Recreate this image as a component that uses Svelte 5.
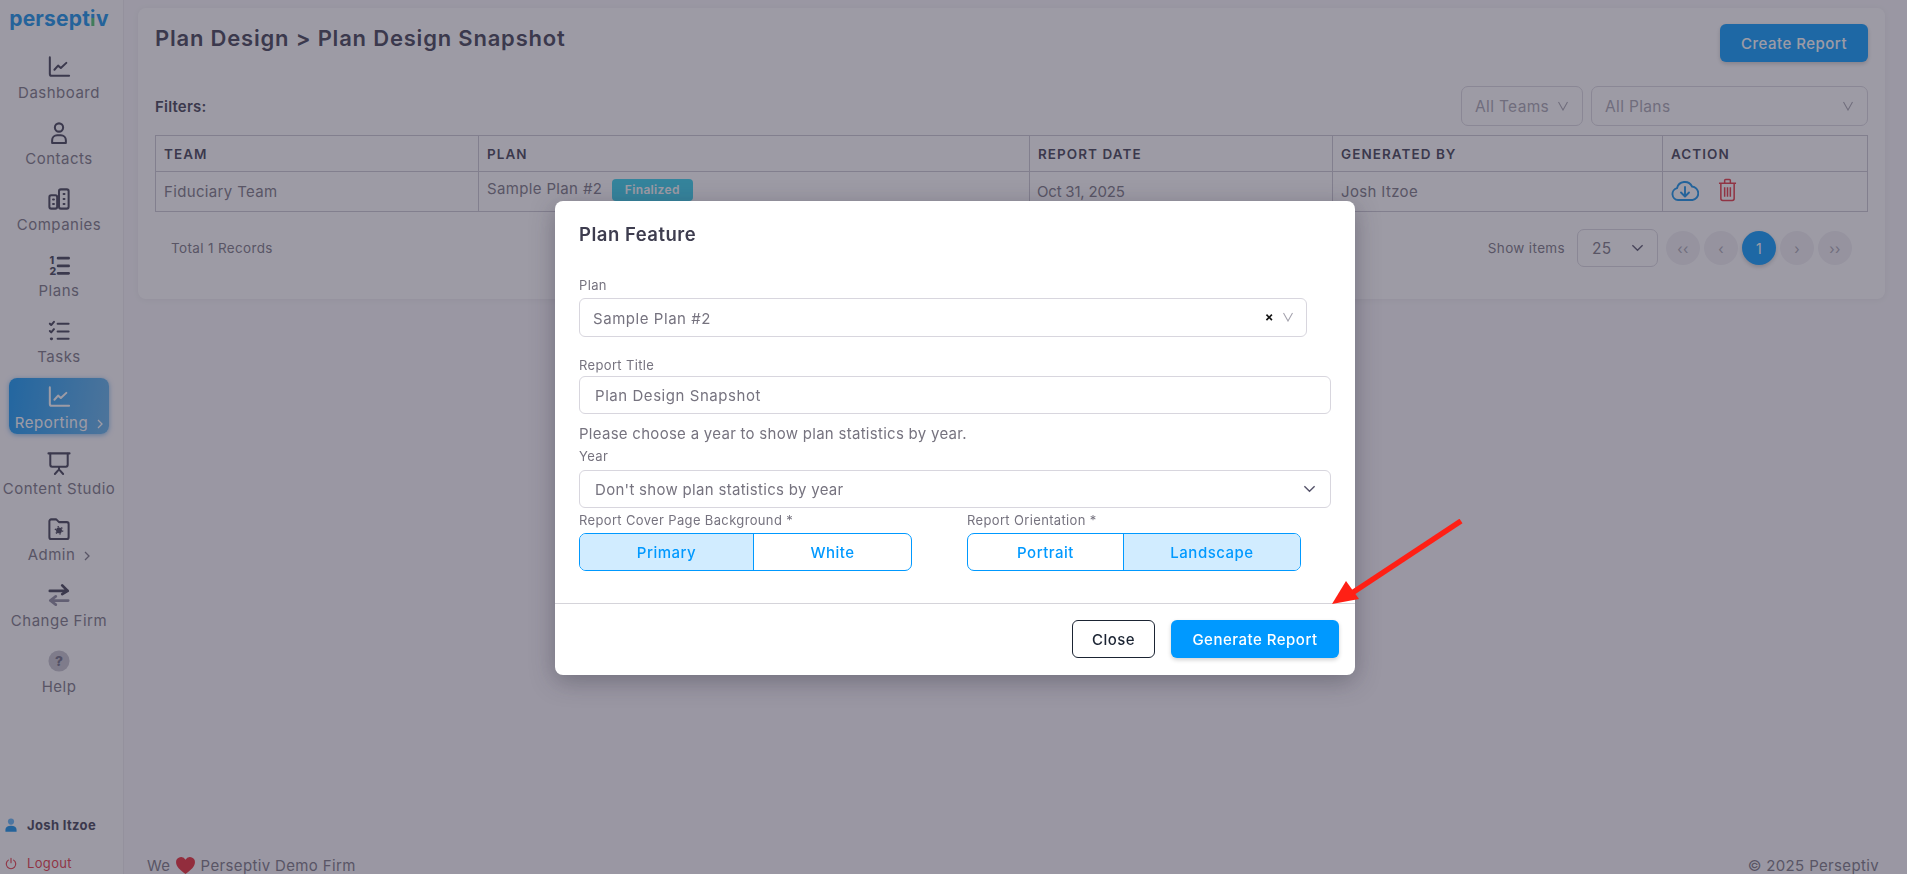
<script>
  const nav = [
    { label: 'Dashboard', icon: 'chart' },
    { label: 'Contacts', icon: 'user' },
    { label: 'Companies', icon: 'company' },
    { label: 'Plans', icon: 'plans' },
    { label: 'Tasks', icon: 'tasks' },
    { label: 'Reporting', icon: 'chart', active: true, more: true },
    { label: 'Content Studio', icon: 'board' },
    { label: 'Admin', icon: 'folder', more: true },
    { label: 'Change Firm', icon: 'swap' },
    { label: 'Help', icon: 'help' }
  ]
  const pages = ['‹‹', '‹', '1', '›', '››']
</script>

{#snippet chevron()}
  <svg class="vee" viewBox="0 0 12 10"><path d="M1.5 1l4.5 8 4.5-8" /></svg>
{/snippet}

{#snippet down()}
  <svg class="down" viewBox="0 0 14 8"><path d="M1.5 1l5.5 5.5 5.5-5.5" /></svg>
{/snippet}

{#snippet navicon(name)}
  <svg class="icon" viewBox="0 0 24 24">
    {#if name === 'chart'}
      <path d="M2 1.500v18a2 2 0 0 0 2 2h19" /><path d="M7 15l4-4.500 3 2.500 6-5.500" />
    {:else if name === 'user'}
      <circle cx="12" cy="6" r="4.500" /><path d="M4.500 23v-3a5.500 5.500 0 0 1 5.500-5.500h4a5.500 5.500 0 0 1 5.500 5.500v3z" />
    {:else if name === 'company'}
      <rect x="1.500" y="8" width="8.500" height="14.500" rx="2" /><rect x="12" y="1.500" width="10.500" height="21" rx="2" />
      <path class="dots" d="M5.500 12.500h1M5.500 17.500h1M17 6.500h1M17 12h1M17 17.500h1" />
    {:else if name === 'plans'}
      <text x="1.500" y="10.500" class="num">1</text><text x="1.500" y="22.500" class="num">2</text>
      <path class="thick" d="M11 4.500h11.500M11 13h11.500M11 21h11.500" />
    {:else if name === 'tasks'}
      <path d="M2 4l1.500 1.500 3-3.500M2 12l1.500 1.500 3-3.500" /><path d="M3.500 20.500h.5" class="thick" />
      <path d="M10.500 4h12M10.500 12.500h12M10.500 20.500h12" />
    {:else if name === 'board'}
      <path d="M.5 1.500h23" /><path d="M2.500 2v12a2 2 0 0 0 2 2h15a2 2 0 0 0 2-2V2" /><path d="M12 16.500v2.500M7.500 24l4.500-5 4.500 5" />
    {:else if name === 'folder'}
      <path d="M1.500 3.500a2 2 0 0 1 2-2h5.500l3 3h8.500a2 2 0 0 1 2 2V21a2 2 0 0 1-2 2H3.500a2 2 0 0 1-2-2z" />
      <circle class="gear" cx="12" cy="13.500" r="3.200" />
      <circle class="teeth" cx="12" cy="13.500" r="4" />
    {:else if name === 'swap'}
      <path class="thick" d="M2 7.500h19.500M15.500 1.500l6 6-6 3.500" />
      <path class="thick faded" d="M22 18h-19.500M8.500 13.500l-6 4.500 6 4.500" />
    {:else}
      <circle class="ball" cx="12" cy="12" r="11.500" /><text x="12" y="17" class="q">?</text>
    {/if}
  </svg>
{/snippet}

<div class="page">
  <aside>
    <div class="logo">persept<span class="logo-i">i</span>v</div>
    <nav>
      {#each nav as item}
        <div class="item" class:active={item.active}>
          {@render navicon(item.icon)}
          <div class="label">
            {item.label}
            {#if item.more}
              <svg class="more" viewBox="0 0 6 10"><path d="M1 1l4 4-4 4" /></svg>
            {/if}
          </div>
        </div>
      {/each}
    </nav>
    <div class="me">
      <svg viewBox="0 0 14 16"><circle cx="7" cy="4" r="3.600" fill="#5fb4f5" /><path d="M.5 16v-2.500C.5 10.500 3 9 7 9s6.500 1.500 6.500 4.500V16z" fill="#0d8fe8" /></svg>
      <b>Josh Itzoe</b>
    </div>
    <div class="logout">
      <svg viewBox="0 0 16 16"><path d="M4.500 3.500a6.300 6.300 0 1 0 7 0M8 1v6" /></svg>
      Logout
    </div>
  </aside>

  <main>
    <section class="card">
      <div class="head">
        <h1>Plan Design &gt; Plan Design Snapshot</h1>
        <button class="create">Create Report</button>
      </div>
      <div class="filters">
        <b>Filters:</b>
        <div class="pick teams"><span>All Teams</span>{@render chevron()}</div>
        <div class="pick plans"><span>All Plans</span>{@render chevron()}</div>
      </div>
      <table>
        <colgroup>
          <col style="width:323px" /><col style="width:551px" /><col style="width:303px" /><col style="width:330px" /><col />
        </colgroup>
        <thead>
          <tr><th>TEAM</th><th>PLAN</th><th>REPORT DATE</th><th>GENERATED BY</th><th>ACTION</th></tr>
        </thead>
        <tbody>
          <tr>
            <td>Fiduciary Team</td>
            <td class="raised">Sample Plan #2 <span class="badge">Finalized</span></td>
            <td class="date">Oct 31, 2025</td>
            <td>Josh Itzoe</td>
            <td class="actions">
              <svg class="cloud" viewBox="0 0 28 22"><path d="M7 21a6 6 0 0 1-1-11.800A8 8 0 0 1 21 7.500 6.800 6.800 0 0 1 21.500 21z" /><path d="M14 8v9M10 13.500l4 4 4-4" /></svg>
              <svg class="trash" viewBox="0 0 20 24"><path d="M1 5h18M7 5V2a1 1 0 0 1 1-1h4a1 1 0 0 1 1 1v3M3 5v16a2 2 0 0 0 2 2h10a2 2 0 0 0 2-2V5M7 9v10M10 9v10M13 9v10" /></svg>
            </td>
          </tr>
        </tbody>
      </table>
      <div class="pager">
        <span class="total">Total 1 Records</span>
        <span class="show">Show items</span>
        <div class="size"><span>25</span>{@render down()}</div>
        <div class="pages">
          {#each pages as p}
            <span class="pg" class:on={p === '1'}>{p}</span>
          {/each}
        </div>
      </div>
    </section>
    <footer>
      <span class="love">We <svg viewBox="0 0 20 18"><path d="M10 18C4 13.500 0 10 0 5.500A5.300 5.300 0 0 1 10 3a5.300 5.300 0 0 1 10 2.500C20 10 16 13.500 10 18z" /></svg> Perseptiv Demo Firm</span>
      <span>© 2025 Perseptiv</span>
    </footer>
  </main>

  <div class="veil">
    <div class="modal">
      <div class="body">
        <h2>Plan Feature</h2>
        <label class="first" for="plan">Plan</label>
        <div class="box plan-box" id="plan">
          <span>Sample Plan #2</span>
          <span class="x">×</span>
          {@render chevron()}
        </div>
        <label class="title-label" for="title">Report Title</label>
        <input id="title" class="box text" value="Plan Design Snapshot" />
        <p>Please choose a year to show plan statistics by year.</p>
        <label class="year-label" for="year">Year</label>
        <div class="box text year" id="year"><span>Don't show plan statistics by year</span>{@render down()}</div>
        <div class="toggles">
          <div class="tg-left">
            <span class="cap">Report Cover Page Background *</span>
            <div class="toggle cover"><span class="sel">Primary</span><span>White</span></div>
          </div>
          <div class="tg-right">
            <span class="cap">Report Orientation *</span>
            <div class="toggle orient"><span>Portrait</span><span class="sel">Landscape</span></div>
          </div>
        </div>
      </div>
      <div class="foot">
        <button class="close">Close</button>
        <button class="generate">Generate Report</button>
      </div>
    </div>
    <svg class="arrow" viewBox="0 0 140 95">
      <path d="M131 2L22 74" class="shaft" />
      <polygon points="2,85 16,62 29,80" />
    </svg>
  </div>
</div>

<style>
  :global(body) {
    margin: 0;
    background: #f8f7fa;
    font-family: Inter, "Liberation Sans", sans-serif;
    color: #76737f;
    letter-spacing: .35px;
  }
  * { box-sizing: border-box; }
  .page { display: flex; height: 874px; overflow: hidden; position: relative; }

  aside {
    width: 124px;
    flex: none;
    padding: 8px 0 0 9px;
    background: #fcfcfd;
    border-right: 1px solid #ecebef;
    display: flex;
    flex-direction: column;
  }
  .logo {
    height: 40px;
    width: 100px;
    color: #0d8fe8;
    font: 700 21px/22px Inter, sans-serif;
    letter-spacing: .2px;
    text-align: center;
    white-space: nowrap;
  }
  .logo-i {
    background: linear-gradient(#0d8fe8 48%, #46c06a 48%);
    -webkit-background-clip: text;
    background-clip: text;
    color: transparent;
  }
  nav { width: 100px; display: flex; flex-direction: column; gap: 10px; }
  .item {
    height: 56px;
    padding-top: 8px;
    border-radius: 8px;
    display: flex;
    flex-direction: column;
    align-items: center;
    color: #76737f;
  }
  .item.active {
    color: #fff;
    background: linear-gradient(100deg, #0a95f5, #5fb1ea);
    box-shadow: 0 1px 5px rgba(0, 120, 220, .5);
  }
  .icon {
    width: 22px;
    height: 22px;
    flex: none;
    overflow: visible;
    fill: none;
    stroke: #3b3a4e;
    stroke-width: 2.200;
    stroke-linecap: round;
    stroke-linejoin: round;
  }
  .active .icon { stroke: #fff; }
  .icon .thick { stroke-width: 3; }
  .icon .faded { stroke: #88869a; }
  .icon .gear { fill: #3b3a4e; stroke: none; }
  .icon .teeth { fill: none; stroke: #3b3a4e; stroke-width: 1.500; stroke-dasharray: 1.500 2.690; stroke-linecap: butt; }
  .icon .ball { fill: #c2c1ca; stroke: none; }
  .icon text { fill: #3b3a4e; stroke: none; font-family: Inter, sans-serif; font-weight: 800; letter-spacing: 0; }
  .icon .num { font-size: 11.500px; }
  .icon .q { font-size: 15px; text-anchor: middle; fill: #6b6a80; }
  .label {
    margin-top: 5px;
    font-size: 15px;
    line-height: 20px;
    letter-spacing: .5px;
    white-space: nowrap;
    display: flex;
    align-items: center;
    gap: 9px;
  }
  .more { width: 6px; height: 10px; fill: none; stroke: currentColor; stroke-width: 1.300; margin-top: 2px; }

  .me, .logout {
    display: flex;
    align-items: center;
    gap: 10px;
    margin-left: -4px;
    font-size: 13px;
  }
  .me { margin-top: auto; color: #3b3a4e; height: 20px; }
  .me b { font-weight: 700; }
  .me svg { width: 12px; height: 14px; }
  .logout { margin-top: 18px; margin-bottom: 1px; height: 20px; color: #e5313c; }
  .logout svg { width: 12px; height: 13px; fill: none; stroke: #e5313c; stroke-width: 1.500; stroke-linecap: round; }

  main {
    flex: 1;
    min-width: 0;
    padding: 8px 22px 0 14px;
    display: flex;
    flex-direction: column;
  }
  .card {
    background: #fff;
    border-radius: 8px;
    padding: 16px 17px 32px;
    box-shadow: 0 1px 6px rgba(0, 0, 0, .06);
  }
  .head { display: flex; justify-content: space-between; align-items: flex-start; height: 38px; }
  h1 { margin: 0; font-size: 22px; line-height: 28px; font-weight: 600; color: #3b3a4e; letter-spacing: .8px; }
  .create {
    width: 148px;
    height: 38px;
    border: 0;
    border-radius: 6px;
    background: #0099ff;
    color: #fff;
    font: 500 15px Inter, sans-serif;
    letter-spacing: .5px;
    box-shadow: 0 2px 4px rgba(0, 0, 0, .2);
  }
  .filters { display: flex; align-items: center; margin-top: 24px; height: 40px; gap: 8px; }
  .filters b { margin-right: auto; font-size: 15px; font-weight: 600; color: #3b3a4e; letter-spacing: .2px; }
  .pick {
    height: 40px;
    padding: 0 13px;
    border: 1px solid #d8d6de;
    border-radius: 7px;
    display: flex;
    align-items: center;
    justify-content: space-between;
    font-size: 15.500px;
    color: #a5a3ae;
  }
  .teams { width: 122px; }
  .plans { width: 277px; }
  .vee { width: 12px; height: 10px; flex: none; fill: none; stroke: #a5a3ae; stroke-width: 1.100; }

  table {
    width: 100%;
    table-layout: fixed;
    border-collapse: collapse;
    margin-top: 9px;
    font-size: 15px;
  }
  th, td { border: 1px solid #c8c6d0; padding: 0 8px; text-align: left; white-space: nowrap; }
  th { height: 36px; font-size: 13.500px; font-weight: 600; color: #3b3a4e; letter-spacing: 1.050px; }
  td { height: 40px; }
  .raised { padding-bottom: 3px; }
  td.date { letter-spacing: -.2px; padding-left: 7px; }
  .badge {
    display: inline-block;
    margin-left: 5px;
    width: 81px;
    height: 22px;
    line-height: 22px;
    text-align: center;
    border-radius: 4px;
    background: #2fd0ec;
    color: #fff;
    font-size: 12px;
    font-weight: 600;
    vertical-align: top;
  }
  .actions { padding-bottom: 4px; }
  .cloud { width: 28px; height: 22px; fill: none; stroke: #0d8fe8; stroke-width: 1.900; stroke-linecap: round; stroke-linejoin: round; }
  .trash { width: 19px; height: 24px; margin-left: 14px; fill: none; stroke: #e5313c; stroke-width: 1.600; stroke-linejoin: round; }
  .actions svg { vertical-align: middle; }

  .pager { display: flex; align-items: center; height: 38px; margin-top: 17px; padding: 0 16px; font-size: 13.500px; }
  .total { margin-right: auto; }
  .show { margin-right: 12px; }
  .size {
    width: 81px;
    height: 38px;
    padding: 0 13px 0 14px;
    border: 1px solid #d8d6de;
    border-radius: 7px;
    display: flex;
    align-items: center;
    justify-content: space-between;
    font-size: 15.500px;
  }
  .down { width: 13px; height: 8px; flex: none; fill: none; stroke: #55536a; stroke-width: 1.500; }
  .pages { display: flex; gap: 4px; margin-left: 8px; }
  .pg {
    width: 34px;
    height: 34px;
    border-radius: 50%;
    background: #f0eff3;
    color: #a5a3ae;
    display: flex;
    align-items: center;
    justify-content: center;
    font-size: 14px;
  }
  .pg.on { background: #0099ff; color: #fff; box-shadow: 0 2px 4px rgba(0, 0, 0, .2); }

  footer {
    margin-top: auto;
    height: 17px;
    padding: 0 6px 0 9px;
    display: flex;
    justify-content: space-between;
    font-size: 15px;
    line-height: 17px;
  }
  .love svg { width: 19px; height: 17px; vertical-align: -3px; fill: #e8232e; margin: 0 1px; }

  .veil {
    position: fixed;
    inset: 0;
    background: rgba(60, 55, 75, .5);
    padding: 201px 0 0 555px;
  }
  .modal {
    width: 800px;
    height: 474px;
    background: #fff;
    border-radius: 8px;
    box-shadow: 0 6px 24px rgba(40, 35, 55, .35);
    display: flex;
    flex-direction: column;
    color: #76737f;
  }
  .body { height: 403px; padding: 21px 24px 0; border-bottom: 1px solid #d5d4da; }
  h2 { margin: 0; font-size: 18.500px; line-height: 24px; font-weight: 600; color: #3e3d4f; letter-spacing: .5px; }
  label, .cap { display: block; font-size: 13px; line-height: 16px; letter-spacing: .35px; }
  .first { margin-top: 31px; }
  .box {
    display: flex;
    align-items: center;
    border: 1px solid #d8d6de;
    border-radius: 6px;
    font: inherit;
    font-size: 15px;
    color: #76737f;
    letter-spacing: .55px;
    background: #fff;
  }
  .plan-box { width: 728px; height: 39px; margin-top: 5px; padding: 2px 12px 0 13px; }
  .plan-box .x { margin-left: auto; margin-right: 8px; color: #111; font-weight: 700; font-size: 13px; margin-top: -3px; }
  .plan-box .vee { margin-top: -3px; }
  .title-label { margin-top: 20px; }
  .text { width: 752px; padding: 0 14px 0 15px; }
  input.text { height: 38px; margin-top: 3px; outline: none; }
  p { margin: 11px 0 0; font-size: 15px; line-height: 18px; letter-spacing: .28px; }
  .year-label { margin-top: 5px; }
  .year { height: 38px; margin-top: 6px; justify-content: space-between; letter-spacing: .3px; }
  .toggles { display: flex; margin-top: 4px; }
  .tg-left { width: 388px; }
  .cap { height: 21px; }
  .toggle {
    display: flex;
    height: 38px;
    border: 1px solid #0099ff;
    border-radius: 7px;
    overflow: hidden;
    color: #0099ff;
    font-size: 15px;
    font-weight: 500;
    letter-spacing: .5px;
  }
  .toggle span { display: flex; align-items: center; justify-content: center; }
  .toggle span + span { border-left: 1px solid #0099ff; }
  .toggle .sel { background: #d1ecff; }
  .cover { width: 333px; }
  .cover span:first-child { width: 173px; }
  .cover span:last-child { flex: 1; }
  .orient { width: 334px; }
  .orient span:first-child { width: 155px; }
  .orient span:last-child { flex: 1; }
  .foot { flex: 1; display: flex; justify-content: flex-end; gap: 16px; padding: 16px 16px 0 0; }
  .foot button { height: 38px; border-radius: 6px; font: 500 15px Inter, sans-serif; letter-spacing: .5px; }
  .close { width: 83px; background: #fff; border: 1px solid #1b2433; color: #1b2433; }
  .generate { width: 168px; background: #0099ff; border: 0; color: #fff; box-shadow: 0 2px 4px rgba(0, 0, 0, .18); }
  .arrow { position: absolute; left: 1330px; top: 519px; width: 140px; height: 95px; }
  .arrow polygon { fill: #ff2015; }
  .arrow .shaft { fill: none; stroke: #ff2015; stroke-width: 5.500; }
</style>
